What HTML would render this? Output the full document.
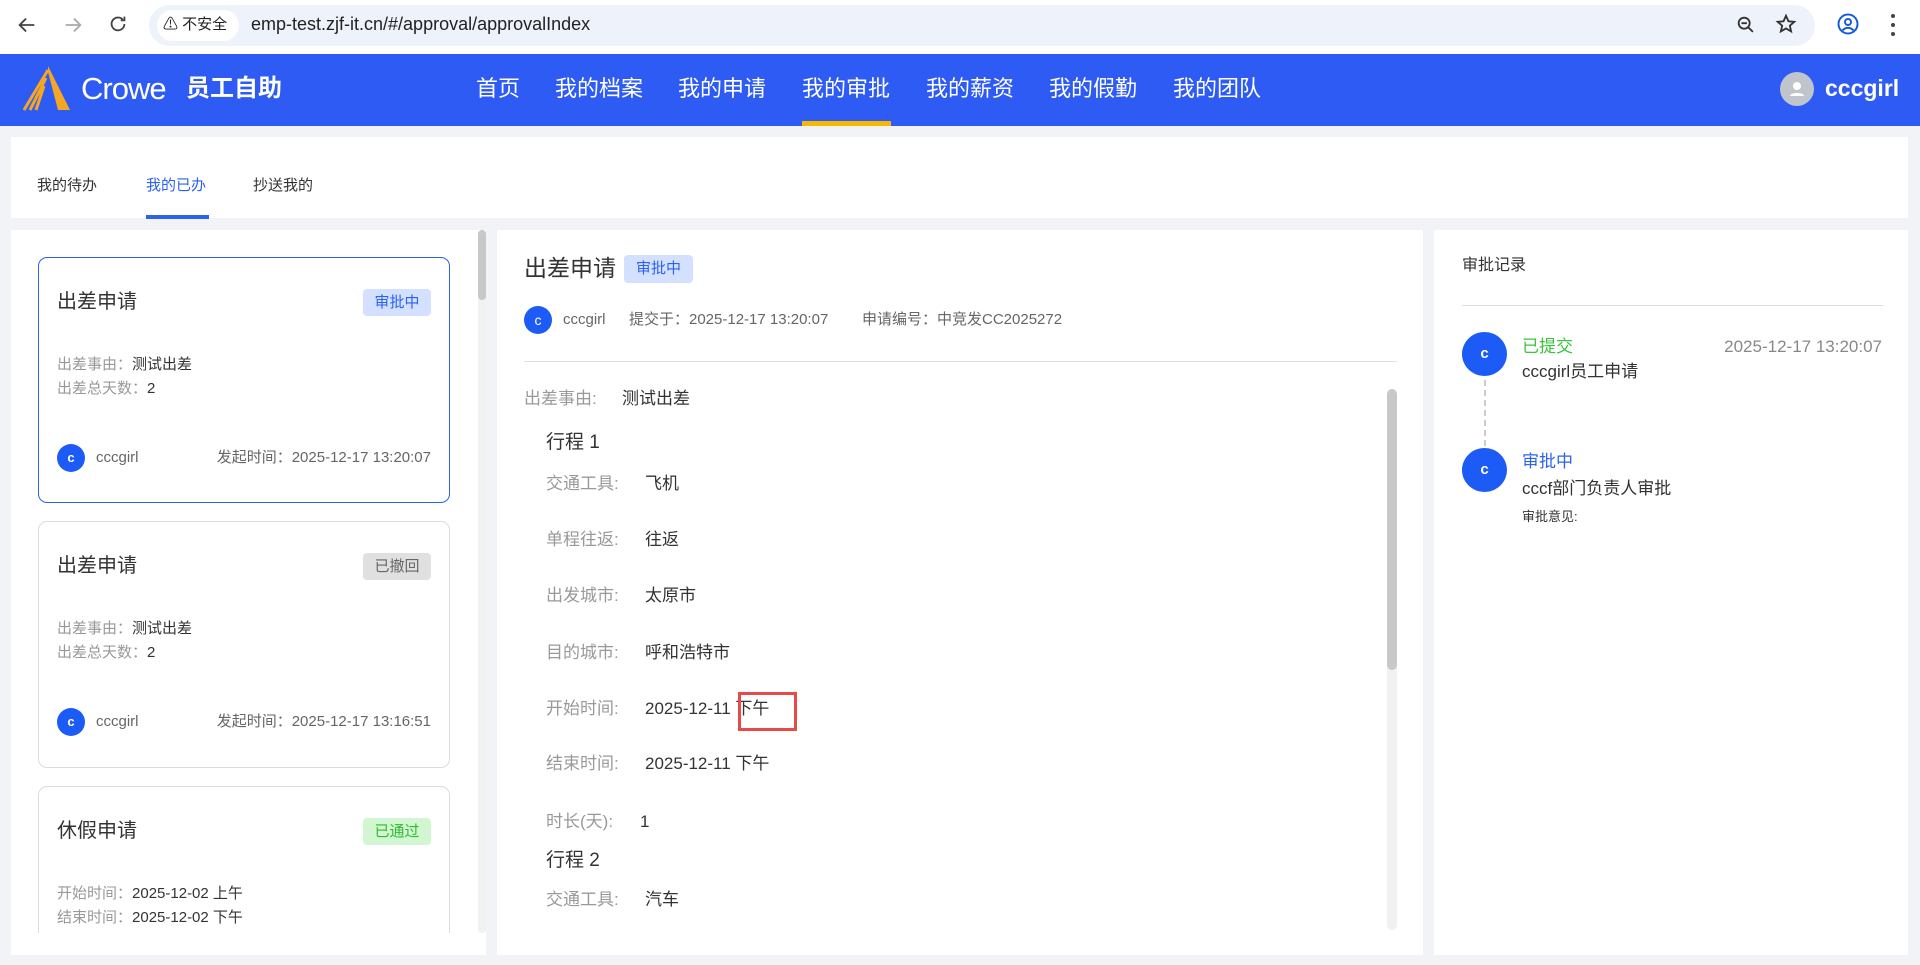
<!DOCTYPE html>
<html><head><meta charset="utf-8"><style>
*{box-sizing:border-box;margin:0;padding:0}
html,body{width:1920px;height:965px;overflow:hidden}
body{background:#f2f3f6;font-family:"Liberation Sans","Noto Sans CJK SC",sans-serif;color:#333;position:relative;line-height:1.2}
.a{position:absolute;white-space:nowrap;line-height:1.2}
.chrome{position:absolute;left:0;top:0;width:1920px;height:54px;background:#fff}
.url{position:absolute;left:149px;top:5px;width:1666px;height:41px;border-radius:21px;background:#eef2fa}
.hdr{position:absolute;left:0;top:54px;width:1920px;height:72px;background:#2f5bf5}
.nav{color:#fff;font-size:22px;top:76px}
.panel{position:absolute;background:#fff}
.card{position:absolute;left:38px;width:412px;border:1px solid #dcdcdc;border-radius:9px;background:#fff}
.card.on{border-color:#2c62f0}
.ct{position:absolute;left:18px;top:32px;font-size:20px;color:#333;line-height:1.2}
.bd{position:absolute;right:18px;top:31px;width:68px;height:27px;border-radius:4px;font-size:15px;text-align:center;line-height:27px}
.f{position:absolute;left:18px;font-size:15px;color:#999;line-height:1.2;white-space:nowrap}
.f b{font-weight:normal;color:#333}
.av{position:absolute;border-radius:50%;background:#1d5bf7;color:#fff;text-align:center;font-weight:bold}
.lbl{color:#999;font-size:17px}
.val{color:#333;font-size:17px}
</style></head><body>
<div class="chrome">
<svg class="a" style="left:16px;top:14px" width="22" height="22" viewBox="0 0 24 24"><path d="M20 12H5M11 5l-7 7 7 7" fill="none" stroke="#444" stroke-width="2"/></svg>
<svg class="a" style="left:62px;top:14px" width="22" height="22" viewBox="0 0 24 24"><path d="M4 12h15M13 5l7 7-7 7" fill="none" stroke="#aaa" stroke-width="2"/></svg>
<svg class="a" style="left:107px;top:13px" width="22" height="22" viewBox="0 0 24 24"><path d="M19 12a7 7 0 1 1-2-5M19 4v4h-4" fill="none" stroke="#444" stroke-width="2"/></svg>
<div class="url"></div>
<div class="a" style="left:157px;top:10px;width:82px;height:31px;border-radius:16px;background:#fff"></div>
<div class="a" style="left:163px;top:16px;font-size:15px;color:#222">⚠ 不安全</div>
<div class="a" style="left:251px;top:14px;font-size:18px;color:#222">emp-test.zjf-it.cn/#/approval/approvalIndex</div>
<svg class="a" style="left:1735px;top:14px" width="22" height="22" viewBox="0 0 24 24"><circle cx="10" cy="10" r="6" fill="none" stroke="#333" stroke-width="2"/><path d="M7 10h6M14.5 14.5l5 5" stroke="#333" stroke-width="2"/></svg>
<svg class="a" style="left:1775px;top:13px" width="22" height="22" viewBox="0 0 24 24"><path d="M12 3l2.7 6 6.3.6-4.8 4.2 1.4 6.3L12 16.8 6.4 20.1l1.4-6.3L3 9.6 9.3 9z" fill="none" stroke="#333" stroke-width="2"/></svg>
<svg class="a" style="left:1836px;top:12px" width="24" height="24" viewBox="0 0 24 24"><circle cx="12" cy="12" r="9.5" fill="none" stroke="#1a5bd8" stroke-width="2"/><circle cx="12" cy="10" r="3" fill="none" stroke="#1a5bd8" stroke-width="2"/><path d="M6.5 18.5c3-3.5 8-3.5 11 0" fill="none" stroke="#1a5bd8" stroke-width="2"/></svg>
<div class="a" style="left:1891px;top:14px;width:4px;height:4px;border-radius:2px;background:#444;box-shadow:0 9px 0 #444,0 18px 0 #444"></div>
</div>
<div class="hdr"></div>
<svg class="a" style="left:22px;top:66px" width="50" height="46" viewBox="0 0 50 46"><path d="M26 0L48 44 36 44 26 6z" fill="#f5a623"/><path d="M26 4L2 44M24 12L8 44M22 20L14 44" stroke="#f5a623" stroke-width="3"/></svg>
<div class="a" style="left:81px;top:70px;font-size:31px;color:#fff;letter-spacing:-1px">Crowe</div>
<div class="a" style="left:186px;top:75px;font-size:24px;color:#fff;font-weight:bold">员工自助</div>
<div class="a nav" style="left:476px">首页</div>
<div class="a nav" style="left:555px">我的档案</div>
<div class="a nav" style="left:678px">我的申请</div>
<div class="a nav" style="left:802px">我的审批</div>
<div class="a nav" style="left:926px">我的薪资</div>
<div class="a nav" style="left:1049px">我的假勤</div>
<div class="a nav" style="left:1173px">我的团队</div>
<div class="a" style="left:802px;top:121px;width:89px;height:5px;background:#f7b800"></div>
<div class="a" style="left:1780px;top:72px;width:34px;height:34px;border-radius:50%;background:#c0c4cc"></div>
<svg class="a" style="left:1787px;top:79px" width="20" height="20" viewBox="0 0 20 20"><circle cx="10" cy="7" r="4" fill="#fff"/><path d="M3 17c0-4 14-4 14 0z" fill="#fff"/></svg>
<div class="a" style="left:1825px;top:75px;font-size:23px;color:#fff;font-weight:bold">cccgirl</div>

<div class="panel" style="left:11px;top:137px;width:1897px;height:81px"></div>
<div class="a" style="left:37px;top:177px;font-size:15px;color:#333">我的待办</div>
<div class="a" style="left:146px;top:177px;font-size:15px;color:#2c62f0">我的已办</div>
<div class="a" style="left:253px;top:177px;font-size:15px;color:#333">抄送我的</div>
<div class="a" style="left:146px;top:215px;width:63px;height:4px;background:#2c62f0"></div>

<div class="panel" style="left:11px;top:230px;width:475px;height:725px;overflow:hidden">
<div class="a" style="left:467px;top:0;width:8px;height:703px;background:#f1f1f1;border-radius:4px"></div>
<div class="a" style="left:467px;top:0;width:8px;height:70px;background:#c8c8c8;border-radius:4px"></div>
<div style="position:absolute;left:0;top:0;width:460px;height:703px;overflow:hidden">
<div class="card on" style="top:27px;height:246px;left:27px">
<div class="ct">出差申请</div><div class="bd" style="background:#d4e0ff;color:#2c62f0">审批中</div>
<div class="f" style="top:98px">出差事由：<b>测试出差</b></div>
<div class="f" style="top:122px">出差总天数：<b>2</b></div>
<div class="av" style="left:18px;top:186px;width:28px;height:28px;line-height:28px;font-size:13px">c</div>
<div class="f" style="left:57px;top:191px;color:#666">cccgirl</div>
<div class="f" style="left:auto;right:18px;top:191px;color:#666">发起时间：2025-12-17 13:20:07</div>
</div>
<div class="card" style="top:291px;height:247px;left:27px">
<div class="ct">出差申请</div><div class="bd" style="background:#e0e0e0;color:#666">已撤回</div>
<div class="f" style="top:98px">出差事由：<b>测试出差</b></div>
<div class="f" style="top:122px">出差总天数：<b>2</b></div>
<div class="av" style="left:18px;top:186px;width:28px;height:28px;line-height:28px;font-size:13px">c</div>
<div class="f" style="left:57px;top:191px;color:#666">cccgirl</div>
<div class="f" style="left:auto;right:18px;top:191px;color:#666">发起时间：2025-12-17 13:16:51</div>
</div>
<div class="card" style="top:556px;height:247px;left:27px">
<div class="ct">休假申请</div><div class="bd" style="background:#d2f5d2;color:#2ebd2e">已通过</div>
<div class="f" style="top:98px">开始时间：<b>2025-12-02 上午</b></div>
<div class="f" style="top:122px">结束时间：<b>2025-12-02 下午</b></div>
<div class="f" style="top:146px">休假类型：<b>陪产假</b></div>
</div>
</div>
</div>

<div class="panel" style="left:497px;top:230px;width:926px;height:725px">
<div class="a" style="left:27px;top:25px;font-size:23px;color:#333">出差申请</div>
<div class="a" style="left:127px;top:25px;width:69px;height:28px;border-radius:4px;background:#d4e0ff;color:#2c62f0;font-size:15px;text-align:center;line-height:28px">审批中</div>
<div class="av" style="left:27px;top:76px;width:28px;height:28px;line-height:28px;font-size:14px;font-weight:normal">c</div>
<div class="a" style="left:66px;top:81px;font-size:15px;color:#666">cccgirl</div>
<div class="a" style="left:132px;top:81px;font-size:15px;color:#666">提交于：2025-12-17 13:20:07</div>
<div class="a" style="left:365px;top:81px;font-size:15px;color:#666">申请编号：中竞发CC2025272</div>
<div class="a" style="left:27px;top:131px;width:873px;height:1px;background:#e2e2e2"></div>
<div class="a" style="left:890px;top:159px;width:10px;height:541px;background:#f1f1f1;border-radius:5px"></div>
<div class="a" style="left:890px;top:159px;width:10px;height:281px;background:#c8c8c8;border-radius:5px"></div>
<div class="a lbl" style="left:27px;top:159px">出差事由:</div><div class="a val" style="left:125px;top:159px">测试出差</div>
<div class="a" style="left:49px;top:202px;font-size:19px;color:#333">行程 1</div>
<div class="a lbl" style="left:49px;top:244px">交通工具:</div><div class="a val" style="left:148px;top:244px">飞机</div>
<div class="a lbl" style="left:49px;top:300px">单程往返:</div><div class="a val" style="left:148px;top:300px">往返</div>
<div class="a lbl" style="left:49px;top:356px">出发城市:</div><div class="a val" style="left:148px;top:356px">太原市</div>
<div class="a lbl" style="left:49px;top:413px">目的城市:</div><div class="a val" style="left:148px;top:413px">呼和浩特市</div>
<div class="a lbl" style="left:49px;top:469px">开始时间:</div><div class="a val" style="left:148px;top:469px">2025-12-11 下午</div>
<div class="a" style="left:241px;top:462px;width:59px;height:39px;border:3px solid #e84a4a"></div>
<div class="a lbl" style="left:49px;top:524px">结束时间:</div><div class="a val" style="left:148px;top:524px">2025-12-11 下午</div>
<div class="a lbl" style="left:49px;top:582px">时长(天):</div><div class="a val" style="left:143px;top:582px">1</div>
<div class="a" style="left:49px;top:620px;font-size:19px;color:#333">行程 2</div>
<div class="a lbl" style="left:49px;top:660px">交通工具:</div><div class="a val" style="left:148px;top:660px">汽车</div>
</div>

<div class="panel" style="left:1434px;top:230px;width:474px;height:725px">
<div class="a" style="left:28px;top:26px;font-size:16px;color:#333">审批记录</div>
<div class="a" style="left:28px;top:75px;width:421px;height:1px;background:#dcdfe6"></div>
<div class="av" style="left:28px;top:102px;width:45px;height:44px;line-height:44px;font-size:15px">c</div>
<div class="a" style="left:50px;top:150px;height:66px;border-left:2px dashed #ccc"></div>
<div class="av" style="left:28px;top:218px;width:45px;height:44px;line-height:44px;font-size:15px">c</div>
<div class="a" style="left:88px;top:107px;font-size:17px;color:#3bc43b">已提交</div>
<div class="a" style="right:26px;top:107px;font-size:17px;color:#888">2025-12-17 13:20:07</div>
<div class="a" style="left:88px;top:132px;font-size:17px;color:#333">cccgirl员工申请</div>
<div class="a" style="left:88px;top:222px;font-size:17px;color:#2c62f0">审批中</div>
<div class="a" style="left:88px;top:249px;font-size:17px;color:#333">cccf部门负责人审批</div>
<div class="a" style="left:88px;top:279px;font-size:13px;color:#333">审批意见:</div>
</div>
</body></html>
